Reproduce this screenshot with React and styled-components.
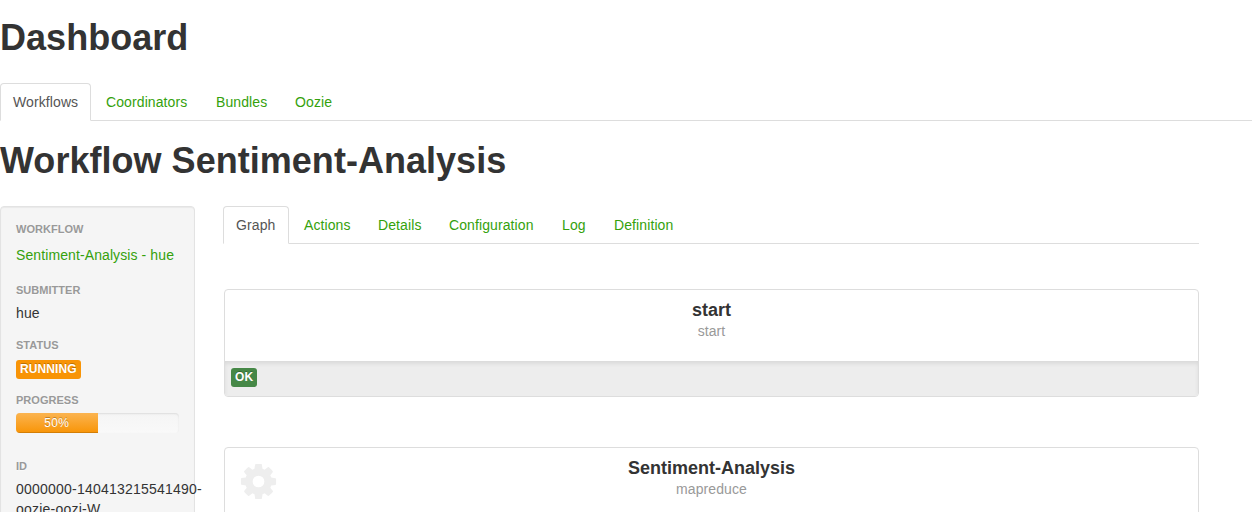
import React from 'react';
import styled, { createGlobalStyle, css } from 'styled-components';

const GlobalStyle = createGlobalStyle`
  * { box-sizing: border-box; }
  html, body { height: 100%; overflow: hidden; }
  body {
    margin: 0;
    background: #fff;
    color: #333;
    font: 14px/20px "Liberation Sans", Arial, sans-serif;
    letter-spacing: 0.1px;
  }
`;

const Page = styled.div`
  height: 512px;
  overflow: hidden;
  padding-top: 17px;
`;

const Title = styled.h1`
  margin: 0 0 24px;
  font-size: 36px;
  line-height: 42px;
  font-weight: bold;
  white-space: nowrap;
  letter-spacing: 0.03px;
`;

const Tabs = styled.nav`
  display: flex;
  height: 38px;
  border-bottom: 1px solid #ddd;
  margin-bottom: ${(p) => p.$gap};
`;

const Tab = styled.a`
  height: 38px;
  width: ${(p) => p.$width}px;
  margin-right: 2px;
  padding: 8px 0 0 12px;
  border: 1px solid transparent;
  border-radius: 4px 4px 0 0;
  color: #34a10c;
  white-space: nowrap;
  ${(p) => p.$active && css`
    color: #555;
    background: #fff;
    border-color: #ddd #ddd #fff;
  `}
`;

const Columns = styled.div`
  display: flex;
  align-items: flex-start;
`;

const Sidebar = styled.aside`
  width: 195px;
  height: 360px;
  flex: none;
  margin-right: 28px;
  padding: 12px 15px;
  background: #f5f5f5;
  border: 1px solid #e3e3e3;
  border-radius: 4px;
  box-shadow: inset 0 1px 1px rgba(0, 0, 0, 0.05);
`;

const Field = styled.section`
  height: ${(p) => p.$height}px;
`;

const Label = styled.h2`
  margin: 0 0 ${(p) => p.$gap || 0}px;
  font-size: 11px;
  line-height: 20px;
  font-weight: bold;
  letter-spacing: 0.03px;
  color: #999;
  text-transform: uppercase;
  text-shadow: 0 1px 0 rgba(255, 255, 255, 0.5);
`;

const Value = styled.div`
  white-space: nowrap;
  letter-spacing: ${(p) => (p.$numeric ? '0.22px' : 'inherit')};
`;

const ValueLink = styled.a`
  display: block;
  color: #34a10c;
  white-space: nowrap;
`;

const Badge = styled.span`
  display: block;
  width: ${(p) => p.$width}px;
  height: 19px;
  padding-left: 4px;
  border-radius: 3px;
  background: ${(p) => p.$color};
  color: #fff;
  font-size: 12px;
  line-height: 18px;
  font-weight: bold;
  text-shadow: 0 -1px 0 rgba(0, 0, 0, 0.25);
  white-space: nowrap;
`;

const Progress = styled.div`
  height: 20px;
  overflow: hidden;
  border-radius: 4px;
  background: linear-gradient(#f5f5f5, #f9f9f9);
  box-shadow: inset 0 1px 2px rgba(0, 0, 0, 0.1);
`;

const ProgressBar = styled.div`
  height: 100%;
  background: linear-gradient(#fbb450, #f89406);
  box-shadow: inset 0 -1px 0 rgba(0, 0, 0, 0.15);
  color: #fff;
  font-size: 12px;
  letter-spacing: 0.4px;
  text-align: center;
  text-shadow: 0 -1px 0 rgba(0, 0, 0, 0.25);
`;

const Main = styled.main`
  width: 976px;
`;

const Node = styled.article`
  display: flex;
  flex-direction: column;
  height: 108px;
  margin: 0 0 50px 1px;
  border: 1px solid #ddd;
  border-radius: 4px;
  overflow: hidden;
`;

const NodeHead = styled.div`
  display: grid;
  grid-template-columns: 50px 1fr 50px;
  height: 71px;
  padding-top: 10px;
`;

const NodeText = styled.div`
  text-align: center;
`;

const NodeTitle = styled.h3`
  margin: 0;
  font-size: 18px;
  line-height: 20px;
  letter-spacing: 0;
`;

const NodeType = styled.div`
  line-height: 22px;
  color: #999;
`;

const NodeFoot = styled.footer`
  flex: 1;
  padding: 7px 6px;
  background: #ededed;
  box-shadow: inset 0 3px 5px -1px rgba(0, 0, 0, 0.1);
`;

const Gear = styled.svg`
  width: 41px;
  height: 41px;
  margin: 3px 0 0 12.5px;
  fill: #eee;
`;

const GearIcon = () => (
  <Gear viewBox="0 0 1792 1792" aria-hidden="true">
    <path d="M1152 896q0-106-75-181t-181-75-181 75-75 181 75 181 181 75 181-75 75-181zm512-109v222q0 12-8 23t-20 13l-185 28q-19 54-39 91 35 50 107 138 10 12 10 25t-9 23q-27 37-99 108t-94 71q-12 0-26-9l-138-108q-44 23-91 38-16 136-29 186-7 28-36 28h-222q-14 0-24.500-8.500t-11.500-21.500l-28-184q-49-16-90-37l-141 107q-10 9-25 9-14 0-25-11-126-114-165-168-7-10-7-23 0-12 8-23 15-21 51-66.500t54-70.500q-27-50-41-99l-183-27q-13-2-21-12.500t-8-23.500v-222q0-12 8-23t19-13l186-28q14-46 39-92-40-57-107-138-10-12-10-24 0-10 9-23 26-36 98.500-107.500t94.500-71.500q13 0 26 10l138 107q44-23 91-38 16-136 29-186 7-28 36-28h222q14 0 24.500 8.500t11.500 21.500l28 184q49 16 90 37l142-107q9-9 24-9 13 0 25 10 129 119 165 170 7 8 7 22 0 12-8 23-15 21-51 66.500t-54 70.500q26 50 41 98l183 28q13 2 21 12.500t8 23.500z" />
  </Gear>
);

const sections = [['Workflows', 91], ['Coordinators', 108], ['Bundles', 77], ['Oozie', 64]];
const views = [['Graph', 66], ['Actions', 72], ['Details', 69], ['Configuration', 111], ['Log', 50], ['Definition', 86]];

const TabBar = ({ items, gap }) => (
  <Tabs $gap={gap}>
    {items.map(([name, width], i) => (
      <Tab key={name} $width={width} $active={i === 0}>{name}</Tab>
    ))}
  </Tabs>
);

const WorkflowNode = ({ title, type, icon, status }) => (
  <Node>
    <NodeHead>
      <div>{icon}</div>
      <NodeText>
        <NodeTitle>{title}</NodeTitle>
        <NodeType>{type}</NodeType>
      </NodeText>
    </NodeHead>
    <NodeFoot>{status && <Badge $width={26} $color="#468847">{status}</Badge>}</NodeFoot>
  </Node>
);

export default function App() {
  return (
    <>
      <GlobalStyle />
      <Page>
        <Title>Dashboard</Title>
        <TabBar items={sections} gap="19px" />
        <Title>Workflow Sentiment-Analysis</Title>
        <Columns>
          <Sidebar>
            <Field $height={61}>
              <Label $gap={6}>Workflow</Label>
              <ValueLink>Sentiment-Analysis - hue</ValueLink>
            </Field>
            <Field $height={55}>
              <Label $gap={3}>Submitter</Label>
              <Value>hue</Value>
            </Field>
            <Field $height={55}>
              <Label $gap={5}>Status</Label>
              <Badge $width={65} $color="#f89406">RUNNING</Badge>
            </Field>
            <Field $height={66}>
              <Label $gap={3}>Progress</Label>
              <Progress><ProgressBar style={{ width: '50%' }}>50%</ProgressBar></Progress>
            </Field>
            <Field $height={70}>
              <Label $gap={3}>ID</Label>
              <Value $numeric>0000000-140413215541490-<br />oozie-oozi-W</Value>
            </Field>
          </Sidebar>
          <Main>
            <TabBar items={views} gap="45px" />
            <WorkflowNode title="start" type="start" status="OK" />
            <WorkflowNode title="Sentiment-Analysis" type="mapreduce" icon={<GearIcon />} />
          </Main>
        </Columns>
      </Page>
    </>
  );
}
